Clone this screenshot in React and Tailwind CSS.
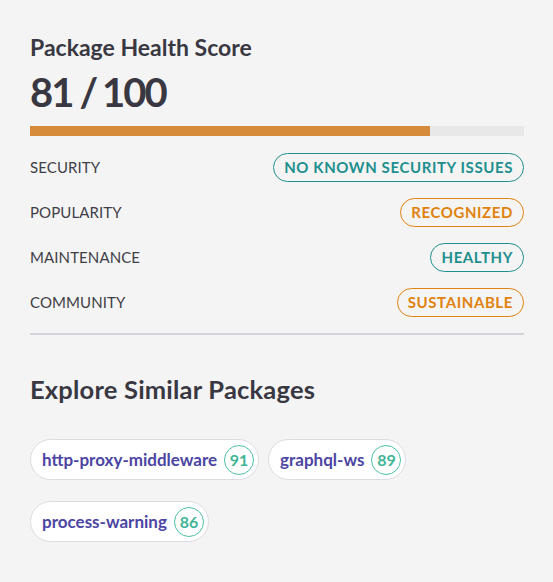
import React from "react";

const rows = [
  { label: "SECURITY", value: "NO KNOWN SECURITY ISSUES", tone: "teal" },
  { label: "POPULARITY", value: "RECOGNIZED", tone: "orange" },
  { label: "MAINTENANCE", value: "HEALTHY", tone: "teal" },
  { label: "COMMUNITY", value: "SUSTAINABLE", tone: "orange" },
];

const similar = [
  { name: "http-proxy-middleware", score: 91 },
  { name: "graphql-ws", score: 89 },
  { name: "process-warning", score: 86 },
];

const App = () => {
  const score = 81;

  return (
    <div
      className="min-h-[582px] w-[553px] bg-[#f4f4f4] text-[#393842]"
      style={{ fontFamily: "Lato, 'Open Sans', sans-serif" }}
    >
      <div className="w-[494px] ml-[30px] pt-[33px]">
        <h2 className="text-[23px] leading-[28px] font-bold">Package Health Score</h2>
        <div className="mt-[9px] text-[40px] leading-[44px] font-bold tracking-[-2px]">
          81<span className="ml-[7px] mr-[6px]">/</span>100
        </div>

        <div className="mt-[12px] h-[10px] w-full bg-[#e8e8e8]">
          <div className="h-full bg-[#d68b3b]" style={{ width: `${score}%` }}></div>
        </div>

        <div className="mt-[17px] flex flex-col gap-[16px]">
          {rows.map((row) => (
            <div key={row.label} className="flex flex-row items-center justify-between h-[29px]">
              <span className="text-[15px] text-[#3f3e47] tracking-[0.1px]">{row.label}</span>
              <span
                className={
                  row.tone === "teal"
                    ? "h-[29px] flex items-center px-[10px] rounded-full border border-[#1d8f8e] text-[#1d8f8e] text-[15px] font-bold tracking-[0.6px]"
                    : "h-[29px] flex items-center px-[10px] rounded-full border border-[#e0820f] text-[#e0820f] text-[15px] font-bold tracking-[0.6px]"
                }
              >
                {row.value}
              </span>
            </div>
          ))}
        </div>

        <div className="mt-[16px] h-[2px] w-full bg-[#d4d4da]"></div>

        <h2 className="mt-[39px] text-[25.5px] leading-[30px] font-bold tracking-[0.2px]">Explore Similar Packages</h2>

        <div className="mt-[35px] flex flex-row flex-wrap gap-x-[9px] gap-y-[21px] w-[420px]">
          {similar.map((pkg) => (
            <div
              key={pkg.name}
              className="h-[41px] flex flex-row items-center gap-[7px] pl-[11px] pr-[4px] rounded-full bg-white border border-[#dcdce0]"
            >
              <span className="text-[17px] font-bold text-[#4b45a3]">{pkg.name}</span>
              <span className="w-[30px] h-[30px] flex items-center justify-center rounded-full border-[1.5px] border-[#4cc0a3] text-[#3fb597] text-[16px] font-bold">
                {pkg.score}
              </span>
            </div>
          ))}
        </div>
      </div>
    </div>
  );
};

export default App;
